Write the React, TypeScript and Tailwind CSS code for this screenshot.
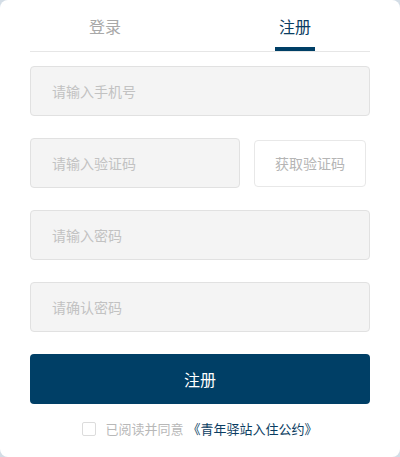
import { useState } from "react";

const font = { fontFamily: '"Noto Sans CJK SC", "Noto Sans", sans-serif' };

const Field = ({ placeholder, className = "" }: { placeholder: string; className?: string }) => (
    <input
        placeholder={placeholder}
        className={"h-[50px] rounded border border-[#e1e1e1] bg-[#f4f4f4] px-[21px] text-[14px] text-[#333] placeholder:text-[#c2c2c2] outline-none " + className}
    />
);

const App = () => {
    const [tab, setTab] = useState(1);
    const [agree, setAgree] = useState(false);

    return (
        <div className="h-[457px] w-[400px] bg-[#d3dde6]" style={font}>
            <div className="h-full w-full rounded-[8px] bg-white px-[30px]">
                {/* tabs */}
                <div className="h-[52px] border-b border-[#e6e6e6]">
                    <div className="-mx-[20px] flex">
                        {["登录", "注册"].map((t, i) => (
                            <button
                                key={t}
                                onClick={() => setTab(i)}
                                className={"relative flex-1 pt-[12px] text-center text-[16px] leading-[28px] " + (tab === i ? "text-[#0a3d62]" : "text-[#a8a8a8]")}
                            >
                                {t}
                                {tab === i && (
                                    <span className="absolute left-1/2 top-[47px] h-[4px] w-[40px] -translate-x-1/2 bg-[#003f66]" />
                                )}
                            </button>
                        ))}
                    </div>
                </div>

                <div className="flex flex-col gap-[22px] pt-[14px]">
                    <Field placeholder="请输入手机号" className="w-full" />
                    <div className="flex items-center gap-[14px]">
                        <Field placeholder="请输入验证码" className="w-[210px]" />
                        <button className="h-[47px] w-[112px] rounded border border-[#e8e8e8] bg-white text-[14px] text-[#b5b5b5]">
                            获取验证码
                        </button>
                    </div>
                    <Field placeholder="请输入密码" className="w-full" />
                    <Field placeholder="请确认密码" className="w-full" />
                    <button className="h-[50px] w-full rounded bg-[#003f66] text-[16px] text-white">
                        注册
                    </button>
                </div>

                <div className="mt-[15px] flex items-center justify-center text-[13px]">
                    <span
                        onClick={() => setAgree(!agree)}
                        className={"mr-[9px] h-[14px] w-[14px] rounded-[2px] border border-[#dcdcdc] " + (agree ? "bg-[#003f66]" : "bg-white")}
                    />
                    <span className="text-[#b8b8b8]">已阅读并同意</span>
                    <span className="ml-[4px] text-[#0a3d62]">《青年驿站入住公约》</span>
                </div>
            </div>
        </div>
    );
};

export default App;
